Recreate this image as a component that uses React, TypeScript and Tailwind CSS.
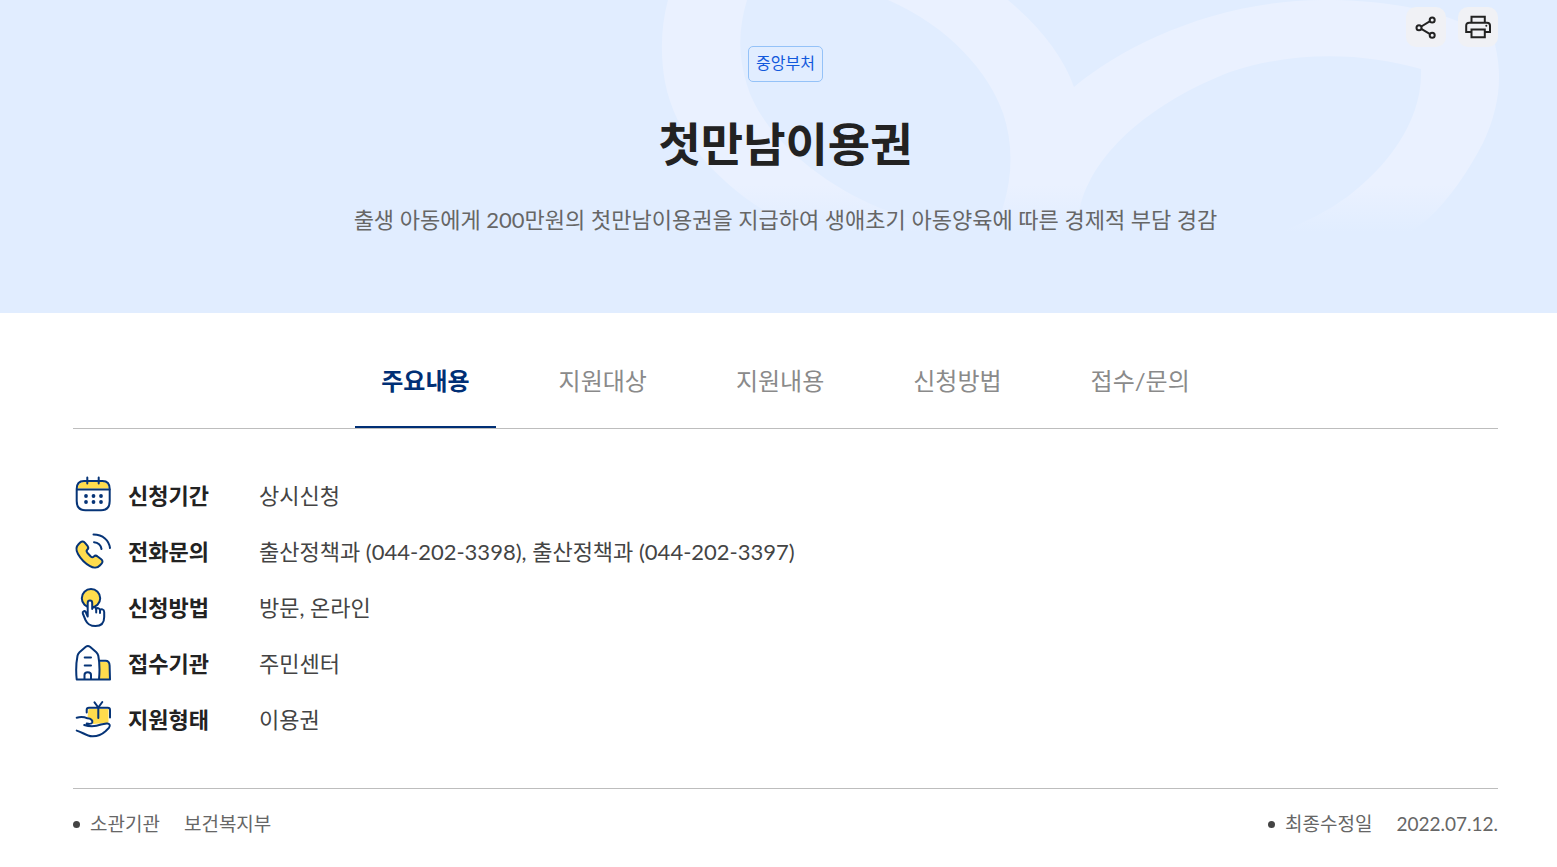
import { useState } from "react";

const tabs = ["주요내용", "지원대상", "지원내용", "신청방법", "접수/문의"];

function CalendarIcon() {
  return (
    <>
      <path
        d="M5 12.500V10.500C6 7.500 8 6 11 6H29.500C33 6 35.500 8 35.800 12.500Z"
        fill="#ffdc4d"
        stroke="none"
      />
      <path d="M11 5H29.500C34.500 5 36.700 8 36.700 13V25C36.700 31 34 34.300 28 34.300H12.500C6.500 34.300 3.700 31 3.700 25V13C3.700 8 6 5 11 5Z" />
      <path d="M4 13.500H36.500M14.300 1.500V7.500M25.700 1.500V7.500" />
      <g fill="#063477" stroke="none">
        <circle cx="13" cy="20" r="1.900" />
        <circle cx="20.500" cy="20" r="1.900" />
        <circle cx="28" cy="20" r="1.900" />
        <circle cx="13" cy="26" r="1.900" />
        <circle cx="20.500" cy="26" r="1.900" />
        <circle cx="28" cy="26" r="1.900" />
      </g>
    </>
  );
}

function PhoneIcon() {
  return (
    <>
      <path
        d="M5.500 12.200L7.500 10.300C9 9 10.700 9.200 12 10.800L14.700 14.200C15.600 15.500 15.400 16.700 14.200 17.800C13.300 18.700 13.500 19.700 14.300 20.700L17.800 24.500C18.900 25.500 19.800 25.600 20.700 24.600C21.800 23.500 23.200 23.300 24.600 24.500L28.200 27.300C29.800 28.600 29.900 30.200 28.600 31.600L26.800 33.500C24.500 36 20.500 36.300 17 34.200C11.500 31 7.800 27 5 22C3 18.500 3 14.700 5.500 12.200Z"
        fill="#ffdc4d"
      />
      <path d="M20.500 2.500C30 2.500 36 8.500 37 16M21 10.200C25 10.600 27.800 13 28.500 17" />
    </>
  );
}

function TouchIcon() {
  return (
    <>
      <circle cx="18" cy="10.300" r="9.200" fill="#ffdc4d" />
      <path
        d="M14.700 28.500V15C14.700 11.800 19.200 11.800 19.200 15V21C19.500 18.600 23 18.700 23.200 21.200C23.800 19.500 26.800 19.800 27 22.200C27.800 20.500 31.200 21 31.200 24V29C31.200 35 28 38 22.500 38C17 38 14.500 36.500 12.500 32L9.800 25.500C9.200 23.500 11.500 22.300 12.700 24Z"
        fill="#fff"
      />
      <path d="M23.200 21V24.500M27 22V25" />
    </>
  );
}

function BuildingIcon() {
  return (
    <>
      <path d="M27 18H33C35 18 36 19 36 21V35H27Z" fill="#ffdc4d" stroke="none" />
      <path d="M3.700 35.500C2.800 27 3.200 18.500 4.500 11.800C4.800 10.200 5.300 9.300 6.500 8.200L12.800 2.800C14.300 1.600 15.500 1.600 17 2.800L23.300 8.200C24.500 9.300 25 10.200 25.300 11.800C26.600 18.500 26.800 27 26 35.500ZM26.500 16.800H32.500C35.500 16.800 36.500 18.500 36.600 21.500L37 35.500H26" />
      <path d="M11.700 13.400H18M11.700 21.400H18M11.500 35V31C11.500 27.300 18 27.300 18 31V35" />
    </>
  );
}

function GiftIcon() {
  return (
    <>
      <path
        d="M15.500 9H35.500V21.500C35.500 23 34.700 23 33 23L20 24L18.500 19L14.500 17Z"
        fill="#ffdc4d"
        stroke="none"
      />
      <path d="M13.700 12.500V9.700C13.700 8.300 14.500 7.800 16 7.800H34.700C36.300 7.800 37 8.500 37 10V17.500M25.300 7.800V18M21.500 2.300L25.300 7.500L29.300 2" />
      <path d="M3.700 17.700C8 16.500 11.500 17 14.500 18.300C18 18.500 20 20.500 19.200 22.700C18.500 24.300 16 24 13.700 23.500M11.200 25C18 27 22.500 26.500 28 24.500L33.500 23.500C36.500 23 38 25.500 35.800 28L32.500 31.300C29 34.500 24 36.500 19 36.300C13.500 36 9 32 3.700 30.600" />
    </>
  );
}

const details = [
  { label: "신청기간", value: "상시신청", Icon: CalendarIcon },
  {
    label: "전화문의",
    value: "출산정책과 (044-202-3398), 출산정책과 (044-202-3397)",
    Icon: PhoneIcon,
  },
  { label: "신청방법", value: "방문, 온라인", Icon: TouchIcon },
  { label: "접수기관", value: "주민센터", Icon: BuildingIcon },
  { label: "지원형태", value: "이용권", Icon: GiftIcon },
];

function HeroPattern() {
  return (
    <svg
      className="absolute top-0 right-[57px] -z-10"
      width="840"
      height="240"
      viewBox="660 0 840 240"
      aria-hidden="true"
    >
      <defs>
        <linearGradient id="fade" x1="0" y1="185" x2="0" y2="232" gradientUnits="userSpaceOnUse">
          <stop offset="0" stopColor="#eaf1ff" />
          <stop offset="1" stopColor="#e1edff" />
        </linearGradient>
      </defs>
      <g fill="url(#fade)">
        <path d="M668 0C661 25 660 55 665 82C675 134 713 178 763 210Q780 221 800 232H955Q915 221 880 208C815 181 761 132 747 85C738 56 738 30 747 0Z" />
        <path d="M888 0C950 27 989 73 1003 113Q1018 158 1003 207L996 232H1072L1080 207C1094 150 1155 101 1230 72C1296 50 1365 53 1421 69C1423 122 1386 168 1347 197Q1320 217 1280 232H1412L1430 217Q1459 189 1483 143Q1500 107 1499 73Q1498 52 1492 34Q1476 27 1460 22C1426 8 1381 0 1323 0C1219 0 1125 44 1074 87Q1058 42 1008 0Z" />
      </g>
    </svg>
  );
}

function Hero() {
  return (
    <header className="relative isolate bg-[#e1edff] pt-[7px] pr-[59px] pb-[75px] pl-[73px]">
      <HeroPattern />
      <div className="flex h-[39px] justify-end gap-3">
        <button
          type="button"
          aria-label="공유하기"
          className="size-10 rounded-[10px] bg-[#f0f1f5]"
        >
          <svg viewBox="0 0 40 40" fill="none" stroke="#222" strokeWidth="2">
            <path d="M15.300 19.500L23.700 14.400M15.300 21.900L23.700 26.800" />
            <circle cx="13" cy="20.700" r="2.500" />
            <circle cx="26.200" cy="13" r="2.500" />
            <circle cx="26.200" cy="28.200" r="2.500" />
          </svg>
        </button>
        <button
          type="button"
          aria-label="인쇄하기"
          className="size-10 rounded-[10px] bg-[#f0f1f5]"
        >
          <svg viewBox="0 0 40 40" fill="none" stroke="#222" strokeWidth="2">
            <path d="M13.500 15.700V9.700H26.800V15.700M13.500 25H8.200V18.700C8.200 16.700 9.200 15.700 11.200 15.700H29C31 15.700 32 16.700 32 18.700V25H26.800" />
            <path d="M13.500 22.500H26.800V30.300H13.500Z" />
            <circle cx="28.300" cy="18.800" r="1" fill="#222" stroke="none" />
          </svg>
        </button>
      </div>
      <div className="flex flex-col items-center text-center">
        <span className="h-9 rounded-[5px] border border-[#94c2f8] px-[7px] text-base leading-8 text-[#1259dc]">
          중앙부처
        </span>
        <h1 className="mt-7 text-[46px] leading-[68px] font-bold text-[#222]">
          첫만남이용권
        </h1>
        <p className="mt-6 text-[22px] leading-9 text-[#666]">
          출생 아동에게 200만원의 첫만남이용권을 지급하여 생애초기 아동양육에 따른 경제적 부담 경감
        </p>
      </div>
    </header>
  );
}

export default function App() {
  const [activeTab, setActiveTab] = useState(tabs[0]);

  return (
    <div className="bg-white font-[Lato,'Noto_Sans_CJK_KR',sans-serif]">
      <Hero />
      <main className="pr-[59px] pl-[73px]">
        <div
          role="tablist"
          className="flex h-[116px] items-end justify-center gap-[37px] border-b border-[#bdbdbd]"
        >
          {tabs.map((tab) => (
            <button
              key={tab}
              type="button"
              role="tab"
              aria-selected={activeTab === tab}
              onClick={() => setActiveTab(tab)}
              className={`border-b-2 px-[26px] pb-7 text-2xl leading-[34px] ${activeTab === tab ? "border-[#002f75] font-bold text-[#002f75]" : "border-transparent text-[#8a8a8a]"}`}
            >
              {tab}
            </button>
          ))}
        </div>

        <dl className="flex flex-col gap-4 border-b border-[#bdbdbd] pt-[47px] pb-12 text-[22px] leading-10">
          {details.map(({ label, value, Icon }) => (
            <div key={label} className="flex items-center">
              <dt className="flex w-[186px] shrink-0 items-center gap-[15px] font-bold text-[#222]">
                <svg
                  className="size-10"
                  viewBox="0 0 40 40"
                  fill="none"
                  stroke="#063477"
                  strokeWidth="2"
                  strokeLinecap="round"
                  strokeLinejoin="round"
                  aria-hidden="true"
                >
                  <Icon />
                </svg>
                {label}
              </dt>
              <dd className="text-[#444]">{value}</dd>
            </div>
          ))}
        </dl>

        <dl className="flex justify-between pt-5 pb-7 text-[19px] leading-[30px] text-[#666]">
          <div className="flex items-center">
            <dt className="flex items-center gap-[10px]">
              <span className="size-[7px] rounded-full bg-[#444]" />
              소관기관
            </dt>
            <dd className="ml-6">보건복지부</dd>
          </div>
          <div className="flex items-center">
            <dt className="flex items-center gap-[10px]">
              <span className="size-[7px] rounded-full bg-[#444]" />
              최종수정일
            </dt>
            <dd className="ml-6">2022.07.12.</dd>
          </div>
        </dl>
      </main>
    </div>
  );
}
